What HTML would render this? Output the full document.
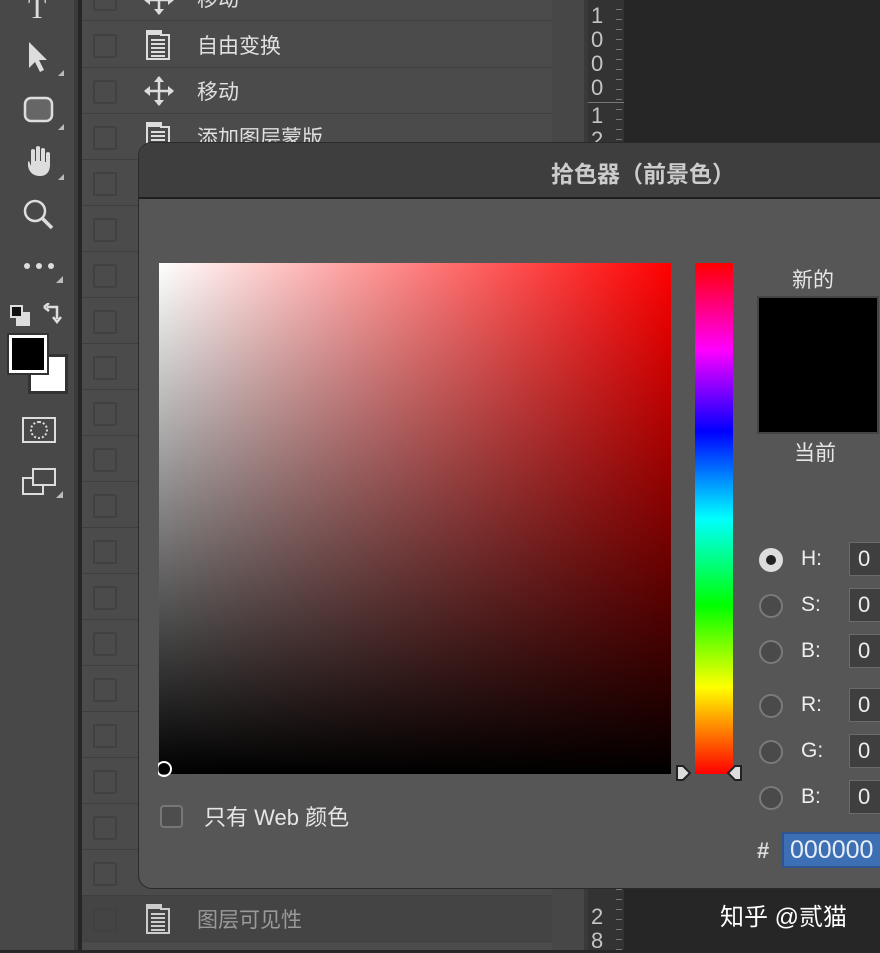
<!DOCTYPE html>
<html><head><meta charset="utf-8"><style>
*{margin:0;padding:0;box-sizing:border-box}
body{width:880px;height:950px;overflow:hidden;background:#262626;position:relative;font-family:"Liberation Sans","Noto Sans CJK SC",sans-serif}
.abs{position:absolute}
#tool{left:0;top:0;width:78px;height:950px;background:#484848;border-right:4px solid #3b3b3b}
#panel{left:82px;top:0;width:470px;height:950px;background:#4b4b4b}
.row{position:absolute;left:0;width:470px;height:46px;border-bottom:1px solid #3f3f3f}
.cb{position:absolute;left:11px;top:12px;width:24px;height:24px;border:2px solid #414141;border-radius:2px}
.lbl{position:absolute;left:115px;top:8px;font-size:21px;color:#e0e0e0}
.doc{position:absolute;left:64px;top:8px}
#gut{left:552px;top:0;width:36px;height:950px;background:#474747;border-right:4px solid #3a3a3a}
#ruler{left:588px;top:0;width:36px;height:950px;background:#333;background-image:repeating-linear-gradient(to bottom,transparent 0 9px,#777 9px 10px);background-size:6px 100%;background-repeat:no-repeat;background-position:28px 0}
#dlg{left:138px;top:142px;width:760px;height:747px;background:#565656;border-radius:14px 0 0 14px;border:1px solid #2a2a2a;overflow:hidden}
#title{left:0;top:0;width:760px;height:56px;background:#3e3e3e;border-bottom:2px solid #1e1e1e}
.t{color:#e6e6e6;font-size:21px}
.rad{position:absolute;left:759px;width:24px;height:24px;border-radius:50%;border:2px solid #7a7a7a;background:#4a4a4a}
.rl{position:absolute;left:801px;font-size:21px;color:#eee}
.in{position:absolute;left:849px;width:40px;height:34px;background:#3f3f3f;border:1px solid #6a6a6a;color:#eee;font-size:22px;padding:3px 0 0 8px}
</style></head><body>
<div id="tool" class="abs">
<div class="abs" style="left:28px;top:-8px;color:#ddd;font-size:30px;font-family:'Liberation Serif',serif">T</div>
<svg class="abs" style="left:22px;top:40px" width="44" height="40"><path d="M7 2 L7 28 L13 22 L18 32 L22 30 L17 20 L25 20 Z" fill="#ddd"/><path d="M36 36 L42 36 L42 30 Z" fill="#bbb"/></svg>
<svg class="abs" style="left:22px;top:94px" width="44" height="40"><rect x="3" y="4" width="27" height="23" rx="6" fill="#666" stroke="#ddd" stroke-width="2.5"/><path d="M36 36 L42 36 L42 30 Z" fill="#bbb"/></svg>
<svg class="abs" style="left:22px;top:144px" width="44" height="40"><path d="M6 18 L6 22 Q8 32 18 32 Q27 32 28 22 L28 9 Q26 7 24 9 L24 18 L23 18 L23 5 Q21 3 19 5 L19 17 L18 17 L18 3 Q16 1 14 3 L14 17 L13 17 L13 6 Q11 4 9 6 L9 22 L7 17 Z" fill="#ddd"/><path d="M36 36 L42 36 L42 30 Z" fill="#bbb"/></svg>
<svg class="abs" style="left:20px;top:196px" width="40" height="36"><circle cx="15" cy="15" r="10" fill="none" stroke="#ddd" stroke-width="2.5"/><path d="M22 22 L32 32" stroke="#ddd" stroke-width="3.5"/></svg>
<div class="abs" style="left:24px;top:263px;width:6px;height:6px;border-radius:50%;background:#ddd;box-shadow:12px 0 #ddd,24px 0 #ddd"></div>
<svg class="abs" style="left:56px;top:276px" width="8" height="8"><path d="M0 7 L7 7 L7 0Z" fill="#bbb"/></svg>
<div class="abs" style="left:16px;top:312px;width:14px;height:14px;background:#ddd"></div>
<div class="abs" style="left:10px;top:305px;width:13px;height:13px;background:#111;border:2px solid #ddd"></div>
<svg class="abs" style="left:43px;top:303px" width="22" height="22"><path d="M4 4 L14 4 L14 16 M1 4 L6 0 M1 4 L6 8 M10 14 L14 19 L18 14" stroke="#ddd" stroke-width="2.5" fill="none"/></svg>
<div class="abs" style="left:28px;top:354px;width:40px;height:40px;background:#fff;border:3px solid #333"></div>
<div class="abs" style="left:9px;top:335px;width:38px;height:38px;background:#000;border:3px solid #fff;outline:2px solid #333"></div>
<div class="abs" style="left:22px;top:417px;width:34px;height:26px;border:2px solid #ddd"></div>
<div class="abs" style="left:30px;top:421px;width:18px;height:18px;border-radius:50%;border:2px dotted #ddd"></div>
<div class="abs" style="left:22px;top:477px;width:22px;height:18px;border:2px solid #ddd"></div>
<div class="abs" style="left:32px;top:468px;width:24px;height:18px;border:2px solid #ddd;background:#484848"></div>
<svg class="abs" style="left:56px;top:491px" width="8" height="8"><path d="M0 7 L7 7 L7 0Z" fill="#bbb"/></svg>
</div>
<div id="panel" class="abs">
<div class="row" style="top:-25px"><div class="cb"></div><svg class="abs" style="left:62px;top:10px" width="30" height="30"><path d="M15 1 V29 M1 15 H29" stroke="#ddd" stroke-width="2.5"/><path d="M15 0 L10 6 H20Z M15 30 L10 24 H20Z M0 15 L6 10 V20Z M30 15 L24 10 V20Z" fill="#ddd"/></svg><div class="lbl">移动</div></div>
<div class="row" style="top:22px"><div class="cb"></div><svg class="doc" width="24" height="30"><path d="M1 1 H15 L15 5 H23 V29 H1 Z" fill="none" stroke="#ddd" stroke-width="2"/><path d="M1 1 H15 V5 H1Z" fill="#ddd"/><path d="M5 10 H19 M5 14 H19 M5 18 H19 M5 22 H19 M5 26 H19" stroke="#ddd" stroke-width="2"/></svg><div class="lbl">自由变换</div></div>
<div class="row" style="top:68px"><div class="cb"></div><svg class="abs" style="left:62px;top:8px" width="30" height="30"><path d="M15 1 V29 M1 15 H29" stroke="#ddd" stroke-width="2.5"/><path d="M15 0 L10 6 H20Z M15 30 L10 24 H20Z M0 15 L6 10 V20Z M30 15 L24 10 V20Z" fill="#ddd"/></svg><div class="lbl">移动</div></div>
<div class="row" style="top:114px"><div class="cb"></div><svg class="doc" width="24" height="30"><path d="M1 1 H15 L15 5 H23 V29 H1 Z" fill="none" stroke="#ddd" stroke-width="2"/><path d="M1 1 H15 V5 H1Z" fill="#ddd"/><path d="M5 10 H19 M5 14 H19 M5 18 H19 M5 22 H19" stroke="#ddd" stroke-width="2"/></svg><div class="lbl">添加图层蒙版</div></div>
<div class="row" style="top:160px"><div class="cb"></div></div>
<div class="row" style="top:206px"><div class="cb"></div></div>
<div class="row" style="top:252px"><div class="cb"></div></div>
<div class="row" style="top:298px"><div class="cb"></div></div>
<div class="row" style="top:344px"><div class="cb"></div></div>
<div class="row" style="top:390px"><div class="cb"></div></div>
<div class="row" style="top:436px"><div class="cb"></div></div>
<div class="row" style="top:482px"><div class="cb"></div></div>
<div class="row" style="top:528px"><div class="cb"></div></div>
<div class="row" style="top:574px"><div class="cb"></div></div>
<div class="row" style="top:620px"><div class="cb"></div></div>
<div class="row" style="top:666px"><div class="cb"></div></div>
<div class="row" style="top:712px"><div class="cb"></div></div>
<div class="row" style="top:758px"><div class="cb"></div></div>
<div class="row" style="top:804px"><div class="cb"></div></div>
<div class="row" style="top:850px"><div class="cb"></div></div>
<div class="row" style="top:896px;background:#444"><div class="cb"></div><svg class="doc" width="24" height="30"><path d="M1 1 H15 L15 5 H23 V29 H1 Z" fill="none" stroke="#ccc" stroke-width="2"/><path d="M1 1 H15 V5 H1Z" fill="#ccc"/><path d="M5 10 H19 M5 14 H19 M5 18 H19 M5 22 H19 M5 26 H19" stroke="#ccc" stroke-width="2"/></svg><div class="lbl" style="color:#9a9a9a">图层可见性</div></div>
</div>
<div id="gut" class="abs"></div>
<div id="ruler" class="abs">
<div class="abs" style="left:3px;top:4px;color:#c4c4c4;font-size:22px;line-height:24px;width:14px">1<br>0<br>0<br>0</div>
<div class="abs" style="left:0;top:102px;width:36px;height:1px;background:#777"></div>
<div class="abs" style="left:3px;top:104px;color:#c4c4c4;font-size:22px;line-height:24px">1<br>2</div>
<div class="abs" style="left:3px;top:905px;color:#c4c4c4;font-size:22px;line-height:24px">2<br>8</div>
</div>
<div id="dlg" class="abs">
<div id="title" class="abs"><div class="abs t" style="left:412px;top:12px;font-weight:bold;color:#ccc;font-size:23px">拾色器（前景色）</div></div>
<div class="abs" style="left:20px;top:120px;width:512px;height:511px;background:linear-gradient(to bottom,rgba(0,0,0,0),#000),linear-gradient(to right,#fff,#f00)"></div>
<div class="abs" style="left:17px;top:618px;width:16px;height:16px;border:2px solid #fff;border-radius:50%;clip-path:inset(0 0 0 2px)"></div>
<div class="abs" style="left:556px;top:120px;width:38px;height:511px;background:linear-gradient(to bottom,#f00,#f0f 17%,#00f 33%,#0ff 50%,#0f0 67%,#ff0 83%,#f00)"></div>
<svg class="abs" style="left:536px;top:621px" width="70" height="20"><path d="M2 2 L8 2 L15 9 L8 16 L2 16 Z" fill="#ddd" stroke="#222" stroke-width="2"/><path d="M66 2 L60 2 L53 9 L60 16 L66 16 Z" fill="#ddd" stroke="#222" stroke-width="2"/></svg>
<div class="abs t" style="left:653px;top:121px">新的</div>
<div class="abs" style="left:618px;top:153px;width:122px;height:138px;background:#000;border:2px solid #444"></div>
<div class="abs t" style="left:655px;top:294px">当前</div>
<div class="abs" style="left:21px;top:662px;width:23px;height:23px;border:2px solid #777;border-radius:4px;background:#4d4d4d"></div>
<div class="abs t" style="left:65px;top:657px;font-size:22px">只有 Web 颜色</div>
</div>
<div class="rad" style="top:548px;background:#ddd;border-color:#ddd"><div style="width:10px;height:10px;border-radius:50%;background:#222;margin:5px"></div></div>
<div class="rad" style="top:594px"></div>
<div class="rad" style="top:640px"></div>
<div class="rad" style="top:694px"></div>
<div class="rad" style="top:740px"></div>
<div class="rad" style="top:786px"></div>
<div class="rl" style="top:547px">H:</div>
<div class="rl" style="top:593px">S:</div>
<div class="rl" style="top:639px">B:</div>
<div class="rl" style="top:693px">R:</div>
<div class="rl" style="top:739px">G:</div>
<div class="rl" style="top:785px">B:</div>
<div class="in" style="top:542px">0</div>
<div class="in" style="top:588px">0</div>
<div class="in" style="top:634px">0</div>
<div class="in" style="top:688px">0</div>
<div class="in" style="top:734px">0</div>
<div class="in" style="top:780px">0</div>
<div class="abs" style="left:757px;top:838px;color:#ddd;font-size:22px;font-weight:bold">#</div>
<div class="abs" style="left:782px;top:832px;width:110px;height:36px;background:#3d6fb4;border:2px solid #2d5590;color:#e8eef8;font-size:25px;padding:2px 0 0 6px">000000</div>
<div class="abs" style="left:720px;top:897px;color:#fff;font-size:24px">知乎 @贰猫</div>
</body></html>
